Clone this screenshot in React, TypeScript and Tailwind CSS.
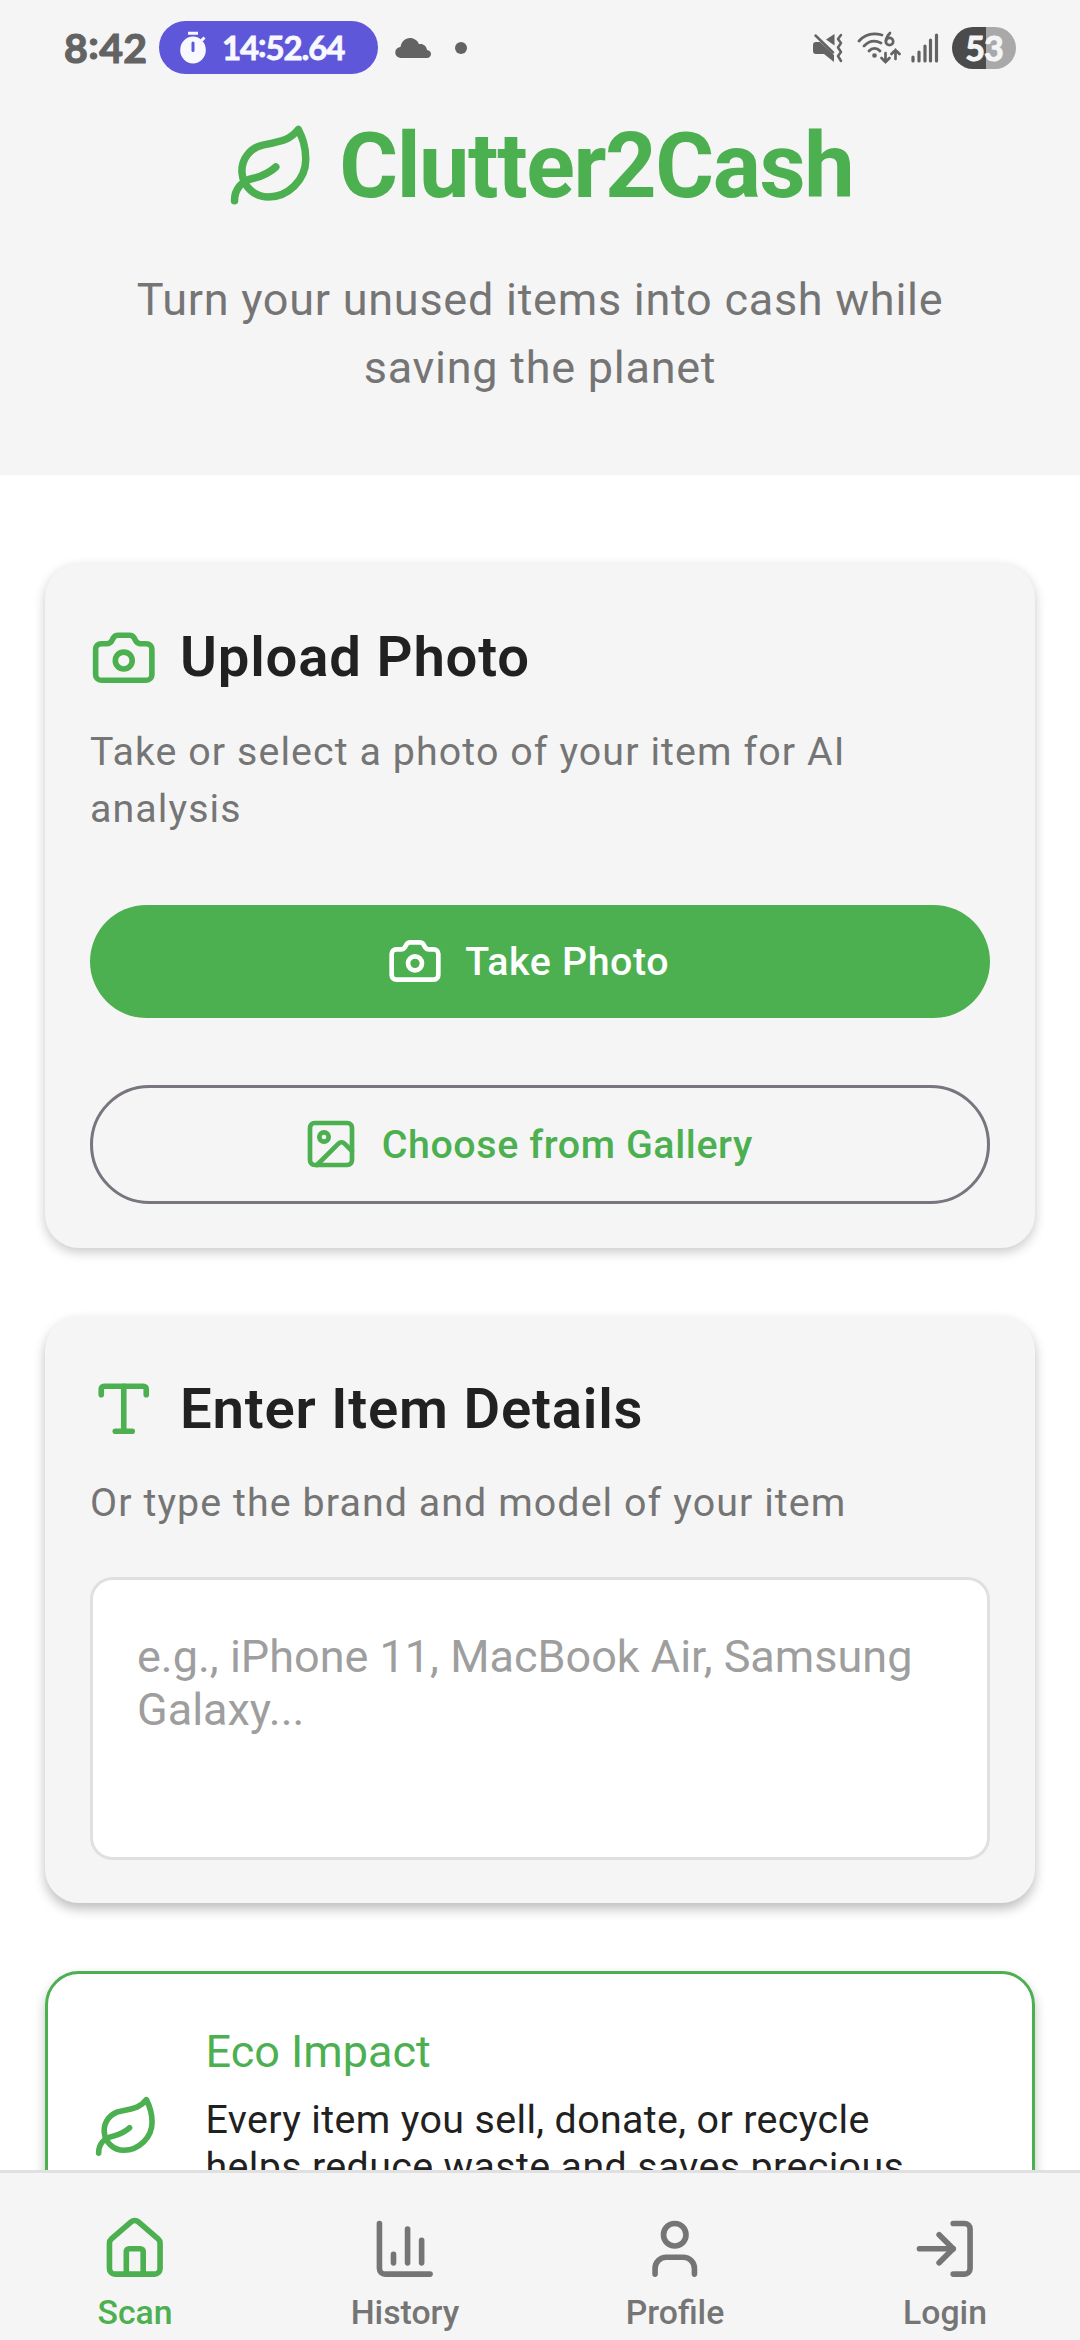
import React from 'react';
import { Camera, ChartColumn, House, Image, Leaf, LogIn, Type, User } from 'lucide-react';
import type { LucideIcon } from 'lucide-react';

const TABS: { label: string; icon: LucideIcon; active?: boolean }[] = [
  { label: 'Scan', icon: House, active: true },
  { label: 'History', icon: ChartColumn },
  { label: 'Profile', icon: User },
  { label: 'Login', icon: LogIn },
];

const StatusBar: React.FC = () => (
  <div className="flex h-[95px] items-center pl-[64px] pr-[64px] text-[#636363]">
    <span className="w-[95px] font-['Lato'] text-[41px] font-bold leading-none tracking-[0.4px] [-webkit-text-stroke:1.2px]">
      8<span className="align-[4px] leading-[0]">:</span>42
    </span>
    <div className="flex h-[53px] w-[219px] items-center rounded-full bg-[#5f57da] pl-[20px] text-[#f8f8ff]">
      <svg width="28" height="34" viewBox="0 0 28 34" fill="none">
        <ellipse cx="14" cy="19" rx="12.800" ry="13.500" fill="currentColor" />
        <path d="M9 2.300h10M22.500 9.500l3-3" stroke="currentColor" strokeWidth="3" />
        <path d="M14 12v7.500" stroke="#5f57da" strokeWidth="3" strokeLinecap="round" />
      </svg>
      <span className="ml-[15px] font-['Lato'] text-[33px] font-bold leading-none tracking-[-1.1px] [-webkit-text-stroke:0.8px]">
        14<span className="align-[3px] leading-[0]">:</span>52.64
      </span>
    </div>
    <svg className="ml-[17px]" width="37" height="22" viewBox="0 0 37 22" fill="currentColor">
      <path d="M6 21a5.500 5.500 0 0 1-.5-11C6.500 4.500 10 1 15 1c4 0 7.500 2.300 9 6.200 4.500-.6 7.500 2 8 5.800 2.500.3 4 1.900 4 4s-1.700 4-4 4Z" />
    </svg>
    <div className="ml-[23px] h-3 w-3 rounded-full bg-[#636363]" />

    <div className="ml-auto flex items-center">
      <svg width="32" height="32" viewBox="0 0 32 32" fill="none">
        <path d="M4 10h4l14 13v7L12 22H4q-3 0-3-3v-6q0-3 3-3Z" fill="currentColor" />
        <path d="M22.500 2v11.500L14 7.500Z" fill="currentColor" />
        <path d="m3.500 3.500 17.500 17" stroke="currentColor" strokeWidth="2.500" strokeLinecap="round" />
        <path d="m29 3-3 4 3 4-3 4.500 3 4.500-3 4 3 5" stroke="currentColor" strokeWidth="2.500" strokeLinecap="round" strokeLinejoin="round" />
      </svg>
      <svg className="ml-[13px]" width="44" height="34" viewBox="0 0 44 34" fill="none" stroke="currentColor" strokeWidth="2.700" strokeLinecap="round">
        <path d="M2 10C9 2 18 2 25 4M7 15c5-5 11-6 17-3M12 20c3-3.500 8-3.500 11 0" />
        <circle cx="17.500" cy="24.500" r="1" fill="currentColor" />
        <path d="M33 2c-3 3-4 5-4 8" />
        <circle cx="32.500" cy="10.500" r="3.700" />
        <path d="M28.500 22v9m-4-4 4 4 4-4M38.500 28v-9m-4 4 4-4 4 4" />
      </svg>
      <svg className="ml-[10px]" width="28" height="32" viewBox="0 0 28 32" stroke="currentColor" strokeWidth="3.200" strokeLinecap="round">
        <path d="M2 25v4M8 20v9M14 14v15M19.500 8v21M25.500 3v26" />
      </svg>
      <div className="ml-[13px] flex h-[42px] w-[64px] items-center justify-center rounded-full bg-linear-to-r from-[#4b4b4b] from-[53%] to-[#a9a9a9] to-[53%] font-['Lato'] text-[34px] font-bold leading-none tracking-[-1px] text-[#f5f5f5] [-webkit-text-stroke:1px]">
        53
      </div>
    </div>
  </div>
);

const CardHeading: React.FC<{ icon: LucideIcon; title: string }> = ({ icon: Icon, title }) => (
  <div className="flex items-center gap-[22.5px]">
    <Icon size={67.5} className="text-[#4caf50]" />
    <h2 className="text-[56.25px] font-semibold leading-[78.75px] tracking-[0.8px] text-[#212121]">{title}</h2>
  </div>
);

const BottomNav: React.FC = () => (
  <nav className="z-10 flex h-[170px] shrink-0 border-t-[3px] border-[#e0e0e0] bg-[#f5f5f5]">
    {TABS.map(({ label, icon: Icon, active }) => (
      <div
        key={label}
        className={`flex flex-1 flex-col items-center pt-[42px] ${active ? 'text-[#4caf50]' : 'text-[#757575]'}`}
      >
        <Icon size={67.5} />
        <span className="mt-[8px] text-[33.75px] font-medium leading-[44px]">{label}</span>
      </div>
    ))}
  </nav>
);

const App: React.FC = () => {
  return (
    <div className="flex h-[2340px] w-[1080px] flex-col overflow-hidden bg-white font-['Roboto',sans-serif]">
      <header className="h-[475px] shrink-0 bg-[#f5f5f5]">
        <StatusBar />
        <div className="mt-[9px] flex items-center justify-center gap-[22.5px] text-[#4caf50]">
          <Leaf size={90} />
          <h1 className="text-[90px] font-bold leading-[126px] tracking-[-1.4px]">Clutter2Cash</h1>
        </div>
        <p className="mt-[36px] px-[90px] text-center text-[45px] leading-[68px] tracking-[0.74px] text-[#757575]">
          Turn your unused items into cash while saving the planet
        </p>
      </header>

      <main className="flex min-h-0 flex-1 flex-col gap-[67.5px] overflow-hidden px-[45px] pt-[89px]">
        {/* Photo upload */}
        <section className="h-[684px] shrink-0 rounded-[34px] bg-[#f5f5f5] px-[45px] pt-[54px] shadow-[0_4px_12px_rgba(0,0,0,0.22)]">
          <CardHeading icon={Camera} title="Upload Photo" />
          <p className="mt-[26px] text-[39.375px] leading-[57px] tracking-[1.08px] text-[#757575]">
            Take or select a photo of your item for AI analysis
          </p>
          <button className="mt-[68px] flex h-[113px] w-full items-center justify-center gap-[22.5px] rounded-full bg-[#4caf50] pr-[24px] text-[39.375px] font-medium tracking-[0.6px] text-white">
            <Camera size={56} />
            Take Photo
          </button>
          <button className="mt-[67px] flex h-[119px] w-full items-center justify-center gap-[22.5px] rounded-full border-[3px] border-[#79747e] pr-[24px] text-[39.375px] font-medium tracking-[0.6px] text-[#4caf50]">
            <Image size={56} />
            Choose from Gallery
          </button>
        </section>

        {/* Manual entry */}
        <section className="h-[587.5px] shrink-0 rounded-[34px] bg-[#f5f5f5] px-[45px] pt-[54px] shadow-[0_6px_12px_rgba(0,0,0,0.26)]">
          <CardHeading icon={Type} title="Enter Item Details" />
          <p className="mt-[27px] text-[39.375px] leading-[56px] tracking-[1.08px] text-[#757575]">
            Or type the brand and model of your item
          </p>
          <textarea
            className="mt-[46px] block h-[283px] w-full resize-none rounded-[22.5px] border-[3px] border-[#e0e0e0] bg-white px-[44px] pt-[50px] text-[45px] leading-[53px] outline-none placeholder:text-[#9e9e9e]"
            placeholder="e.g., iPhone 11, MacBook Air, Samsung Galaxy..."
          />
        </section>

        {/* Eco impact */}
        <section className="flex h-[314px] shrink-0 items-center gap-[45px] rounded-[34px] border-[3px] border-[#4caf50] bg-white pl-[45px] pr-[90px] shadow-[0_6px_12px_rgba(0,0,0,0.24)]">
          <Leaf size={67.5} className="shrink-0 text-[#4caf50]" />
          <div className="flex-1">
            <h3 className="text-[45px] leading-[67.5px] text-[#4caf50]">Eco Impact</h3>
            <p className="mt-[11px] text-[39.375px] leading-[47px] tracking-[0.37px] text-[#212121]">
              Every item you sell, donate, or recycle helps reduce waste and saves precious resources.
            </p>
          </div>
        </section>
      </main>

      <BottomNav />
    </div>
  );
};

export default App;
